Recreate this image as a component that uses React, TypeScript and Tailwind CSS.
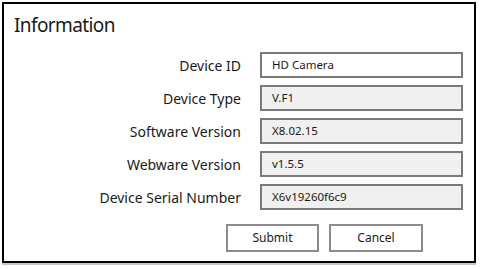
import React from 'react';

const rows = [
  { label: 'Device ID', value: 'HD Camera', editable: true },
  { label: 'Device Type', value: 'V.F1' },
  { label: 'Software Version', value: 'X8.02.15' },
  { label: 'Webware Version', value: 'v1.5.5' },
  { label: 'Device Serial Number', value: 'X6v19260f6c9' },
];

export default function App() {
  return (
    <div className="w-[481px] h-[269px] bg-white p-[2px] font-['Noto_Sans',sans-serif] text-[#1a1a1a]">
      <div className="w-[474px] h-[261px] border-2 border-black bg-white shadow-[0_2px_0_#c8c8c8] flex flex-col">
        <h2 className="pl-[10px] pt-[8px] text-[19px] leading-[26px] tracking-[-0.6px]">Information</h2>
        <div className="mt-[14px] flex flex-col gap-[7px]">
          {rows.map((r) => (
            <div key={r.label} className="flex items-center">
              <span className="w-[237px] text-right text-[14px]">{r.label}</span>
              <div
                className={`ml-[19px] w-[203px] h-[26px] border-2 border-[#7a7a7a] flex items-center pl-[10px] text-[11.5px] ${
                  r.editable ? 'bg-white' : 'bg-[#f0f0f0]'
                }`}
              >
                {r.value}
              </div>
            </div>
          ))}
        </div>
        <div className="mt-[14px] pl-[222px] flex gap-[10px]">
          <button className="w-[93px] h-[28px] border-2 border-[#8c8c8c] bg-white text-[12px]">Submit</button>
          <button className="w-[94px] h-[28px] border-2 border-[#8c8c8c] bg-white text-[12px]">Cancel</button>
        </div>
      </div>
    </div>
  );
}
